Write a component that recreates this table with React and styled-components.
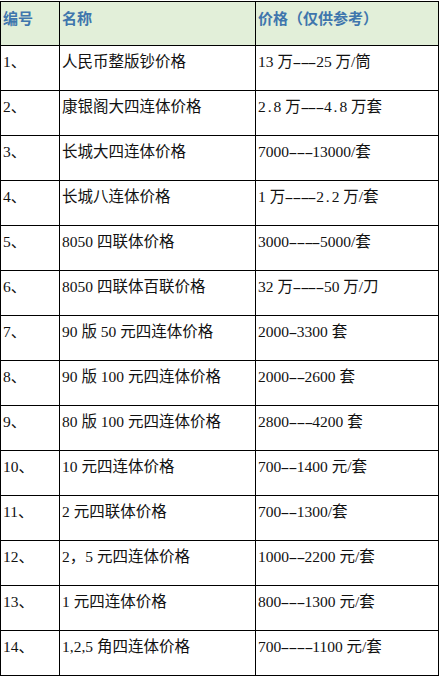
import React from "react";
import styled, { createGlobalStyle } from "styled-components";

const GlobalStyle = createGlobalStyle`
  html, body {
    margin: 0;
    padding: 0;
    background: #ffffff;
  }
`;

const rows = [
  ["1、", "人民币整版钞价格", "13 万---25 万/筒"],
  ["2、", "康银阁大四连体价格", "2.8 万---4.8 万套"],
  ["3、", "长城大四连体价格", "7000---13000/套"],
  ["4、", "长城八连体价格", "1 万----2.2 万/套"],
  ["5、", "8050 四联体价格", "3000----5000/套"],
  ["6、", "8050 四联体百联价格", "32 万----50 万/刀"],
  ["7、", "90 版 50 元四连体价格", "2000-3300 套"],
  ["8、", "90 版 100 元四连体价格", "2000--2600 套"],
  ["9、", "80 版 100 元四连体价格", "2800---4200 套"],
  ["10、", "10 元四连体价格", "700--1400 元/套"],
  ["11、", "2 元四联体价格", "700--1300/套"],
  ["12、", "2，5 元四连体价格", "1000--2200 元/套"],
  ["13、", "1 元四连体价格", "800---1300 元/套"],
  ["14、", "1,2,5 角四连体价格", "700----1100 元/套"],
];

const Page = styled.div`
  padding-top: 1px;
`;

const Table = styled.table`
  border-collapse: collapse;
  table-layout: fixed;
  width: 438px;
  font-family: "Liberation Serif", "Noto Sans CJK SC", serif;
  color: #111;
`;

const HeadCell = styled.th`
  width: ${(p) => p.w}px;
  height: 44px;
  background: #e2efd9;
  border: 1px solid #000;
  padding: 6px 0 0 2px;
  text-align: left;
  vertical-align: top;
  font-family: "Noto Sans CJK SC", sans-serif;
  font-weight: 700;
  font-size: 15px;
  line-height: 20px;
  color: #3f76ad;
  box-sizing: border-box;
`;

const Cell = styled.td`
  height: 45px;
  border: 1px solid #000;
  padding: 6px 0 0 2px;
  vertical-align: top;
  font-size: 15.5px;
  line-height: 20px;
  white-space: nowrap;
  overflow: hidden;
  box-sizing: border-box;
`;

// half-width mark, as in the old song-style font the sheet was typed in
const Half = styled.span`
  display: inline-block;
  width: 0.5em;
  text-align: center;
  transform: ${(p) => (p.$dash ? "scaleX(1.7)" : "none")};
`;

const halfWidth = (text) =>
  text.split(/([-.])/).map((part, i) =>
    part === "-" || part === "." ? (
      <Half key={i} $dash={part === "-"}>
        {part}
      </Half>
    ) : (
      part
    )
  );

export default function App() {
  return (
    <Page>
      <GlobalStyle />
      <Table>
        <thead>
          <tr>
            <HeadCell w={59}>编号</HeadCell>
            <HeadCell w={196}>名称</HeadCell>
            <HeadCell w={183}>价格（仅供参考）</HeadCell>
          </tr>
        </thead>
        <tbody>
          {rows.map(([no, name, price]) => (
            <tr key={no}>
              <Cell>{no}</Cell>
              <Cell>{name}</Cell>
              <Cell>{halfWidth(price)}</Cell>
            </tr>
          ))}
        </tbody>
      </Table>
    </Page>
  );
}
